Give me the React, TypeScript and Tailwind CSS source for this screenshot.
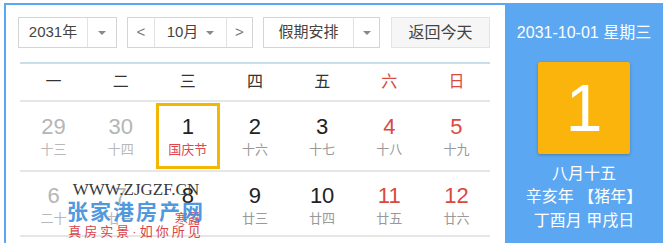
import React from 'react';

type Day = {
  num: number;
  lunar: string;
  faded?: boolean;
  weekend?: boolean;
  festival?: boolean;
  selected?: boolean;
};

const weekdays = ['一', '二', '三', '四', '五', '六', '日'];

const rows: Day[][] = [
  [
    { num: 29, lunar: '十三', faded: true },
    { num: 30, lunar: '十四', faded: true },
    { num: 1, lunar: '国庆节', festival: true, selected: true },
    { num: 2, lunar: '十六' },
    { num: 3, lunar: '十七' },
    { num: 4, lunar: '十八', weekend: true },
    { num: 5, lunar: '十九', weekend: true },
  ],
  [
    { num: 6, lunar: '二十', faded: true },
    { num: 7, lunar: '廿一', faded: true },
    { num: 8, lunar: '寒露', festival: true },
    { num: 9, lunar: '廿三' },
    { num: 10, lunar: '廿四' },
    { num: 11, lunar: '廿五', weekend: true },
    { num: 12, lunar: '廿六', weekend: true },
  ],
];

function Caret() {
  return <span className="inline-block h-0 w-0 border-x-[4px] border-t-[4px] border-x-transparent border-t-[#888]" />;
}

function DayCell({ day }: { day: Day }) {
  const numColor = day.faded ? 'text-[#b5b5b5]' : day.weekend ? 'text-[#d9493f]' : 'text-[#222]';
  const lunarColor = day.festival ? 'text-[#e0474c]' : day.faded ? 'text-[#b8b8b8]' : 'text-[#999]';
  return (
    <div className="flex items-center justify-center">
      <div
        className={`flex h-[66px] w-[64px] flex-col items-center justify-center ${
          day.selected ? 'border-[3px] border-[#f2b705]' : ''
        }`}
      >
        <span className={`text-[22px] leading-[26px] ${numColor}`}>{day.num}</span>
        <span className={`mt-[1px] text-[13px] leading-[18px] ${lunarColor}`}>{day.lunar}</span>
      </div>
    </div>
  );
}

export default function App() {
  return (
    <div className="h-[252px] w-[667px] bg-white pl-[4px] pt-[3px] font-['Liberation_Sans','Noto_Sans_CJK_SC',sans-serif]">
      <div className="flex h-[240px] w-[659px] bg-[#5ca7f1]">
        <div className="relative ml-[2px] mt-[2px] h-[238px] w-[499px] bg-white pl-[12px] pt-[12px]">
          <div className="flex h-[31px] items-stretch text-[15px] text-[#444]">
            <div className="flex w-[99px] border border-[#d4d4d4]">
              <div className="flex flex-1 items-center justify-center border-r border-[#e2e2e2]">2031年</div>
              <div className="flex w-[28px] items-center justify-center">
                <Caret />
              </div>
            </div>
            <div className="ml-[10px] flex w-[126px] border border-[#d4d4d4]">
              <div className="flex w-[27px] items-center justify-center border-r border-[#e2e2e2] text-[#777]">&lt;</div>
              <div className="flex flex-1 items-center justify-center gap-[8px] border-r border-[#e2e2e2]">
                10月
                <Caret />
              </div>
              <div className="flex w-[25px] items-center justify-center text-[#777]">&gt;</div>
            </div>
            <div className="ml-[10px] flex w-[117px] border border-[#d4d4d4]">
              <div className="flex flex-1 items-center justify-center border-r border-[#e2e2e2]">假期安排</div>
              <div className="flex w-[25px] items-center justify-center">
                <Caret />
              </div>
            </div>
            <div className="ml-[11px] flex w-[99px] items-center justify-center border border-[#e4e4e4] bg-[#f6f6f6] text-[16px]">
              返回今天
            </div>
          </div>

          <div className="ml-[2px] mt-[14px] w-[470px] border-t-2 border-[#c9dee8]">
            <div className="grid h-[38px] grid-cols-7 items-center border-b-2 border-[#e6e6e6] text-[16px]">
              {weekdays.map((w, i) => (
                <div key={w} className={`text-center ${i >= 5 ? 'text-[#d9493f]' : 'text-[#333]'}`}>
                  {w}
                </div>
              ))}
            </div>
            <div className="grid h-[70px] grid-cols-7 items-center border-b-2 border-[#e6e6e6]">
              {rows[0].map((d) => (
                <DayCell key={d.num} day={d} />
              ))}
            </div>
            <div className="grid h-[65px] grid-cols-7 items-center border-b-2 border-[#e6e6e6]">
              {rows[1].map((d) => (
                <DayCell key={d.num} day={d} />
              ))}
            </div>
          </div>

          {/* watermark over the second week */}
          <div className="absolute left-[60px] top-[175px] flex w-[140px] flex-col items-center whitespace-nowrap">
            <span className="font-['Liberation_Serif',serif] text-[17px] leading-[20px] text-[#3a3a3a]">
              WWW.ZJGZF.CN
            </span>
            <span className="text-[21px] font-bold leading-[23px] tracking-[2px] text-[#3e8fdc] opacity-90">
              张家港房产网
            </span>
            <span className="text-[13px] leading-[18px] tracking-[3px] text-[#d8454a]">真房实景·如你所见</span>
          </div>
        </div>

        <div className="flex flex-1 flex-col items-center pt-[20px] text-white">
          <div className="text-[16px] leading-[20px]">2031-10-01 星期三</div>
          <div className="mt-[19px] flex h-[92px] w-[92px] items-center justify-center rounded-[2px] bg-[#fbb40c] shadow-[0_1px_3px_rgba(0,0,0,0.25)]">
            <span className="text-[66px] leading-none">1</span>
          </div>
          <div className="mt-[8px] text-[16px] leading-[23px]">八月十五</div>
          <div className="text-[16px] leading-[24px]">辛亥年 【猪年】</div>
          <div className="text-[16px] leading-[23px]">丁酉月 甲戌日</div>
        </div>
      </div>
    </div>
  );
}
